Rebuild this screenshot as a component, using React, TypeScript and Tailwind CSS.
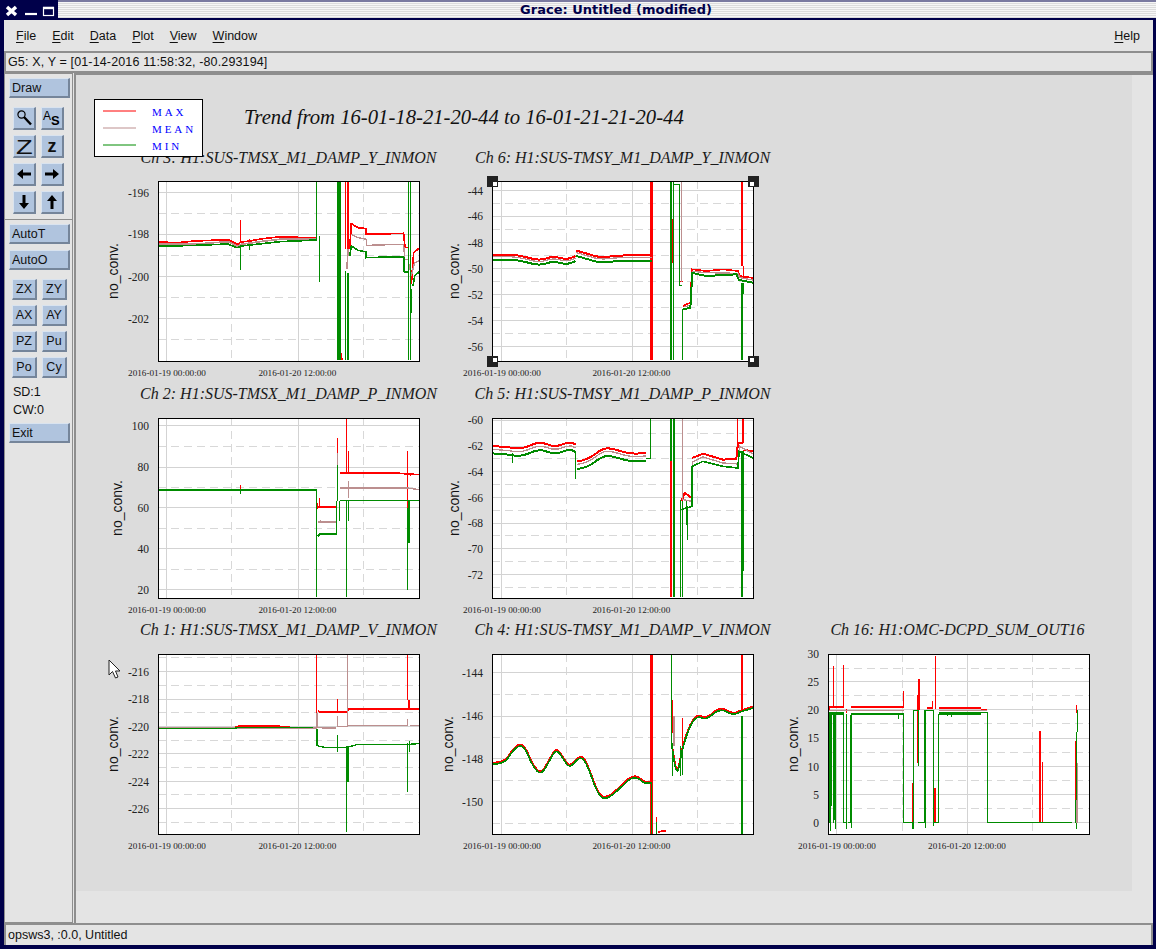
import { ReactNode } from 'react';

const R = '#ff0000';
const M = '#bc8f8f';
const G = '#008b00';

type Trace = [string, number, string];

type PlotDef = {
  id: string;
  title: string;
  ox: number;
  oy: number;
  fx: number;
  fy: number;
  labelX: number;
  vSolid: number[];
  vDash: number[];
  ticks: [number, string][];
  minor: number[];
  traces: Trace[];
  handles?: boolean;
};

// smooth line through points, coordinates are in 3x crop units
function smooth(pts: number[][], dy = 0) {
  let d = `M${pts[0][0]} ${pts[0][1] + dy}`;
  for (let i = 1; i < pts.length - 1; i++) {
    const mx = (pts[i][0] + pts[i + 1][0]) / 2;
    const my = (pts[i][1] + pts[i + 1][1]) / 2 + dy;
    d += ` Q${pts[i][0]} ${pts[i][1] + dy} ${mx} ${my}`;
  }
  const last = pts[pts.length - 1];
  return d + ` L${last[0]} ${last[1] + dy}`;
}

const wave1 = [[157, 434], [195, 432], [215, 398], [240, 375], [258, 388], [280, 442], [305, 467], [330, 422], [350, 387], [370, 417], [390, 447], [420, 410], [440, 427], [475, 527], [500, 540], [535, 512], [575, 472], [600, 477], [612, 491], [636, 491]];
const wave2 = [[697, 380], [705, 440], [715, 462], [725, 400], [745, 332], [770, 287], [800, 302], [840, 265], [880, 287], [900, 277], [940, 265]];

const ch6a = [[157, 316], [190, 316], [220, 316], [255, 322], [300, 334], [340, 320], [380, 331], [408, 320]];
const ch6b = [[410, 304], [440, 312], [480, 325], [540, 318], [590, 318], [636, 318]];
const ch5a = [[157, 184], [215, 188], [225, 192], [255, 190], [300, 170], [345, 188], [390, 171], [408, 180]];
const ch5b = [[412, 230], [440, 228], [490, 190], [520, 192], [570, 208], [620, 205]];

const col1V = { vSolid: [202, 596], vDash: [397, 791] };
const col2V = { vSolid: [187, 578], vDash: [382, 775] };

const plots: PlotDef[] = [
  {
    id: 'p3', title: 'Ch 3: H1:SUS-TMSX_M1_DAMP_Y_INMON', ox: 175, oy: 95, fx: 60, fy: 12, labelX: -45, ...col1V,
    ticks: [[130, '-196'], [255, '-198'], [382, '-200'], [508, '-202']],
    minor: [193, 320, 445, 570],
    traces: [
      [R, 5, 'M175 278 L235 280 285 275 385 271 415 285 423 278 L425 278 450 275 490 268 535 263 652 265'],
      [R, 3, 'M424 213 V280 M451 268 V280'],
      [R, 5, 'M715 125 V300'],
      [R, 4, 'M737 95 V300 M745 95 V300 M722 603 L728 633'],
      [R, 5, 'M750 300 L755 223 775 235 800 238 V255 L912 252 916 295 H925 M935 405 L942 310 958 297'],
      [M, 5, 'M175 285 L290 284 385 277 412 290 425 285 495 275 540 270 652 270 M716 175 V260 M742 360 L745 300'],
      [M, 4, 'M755 255 L775 265 800 270 V288 L912 285 915 330 H925 L935 380 945 340 958 335'],
      [G, 5, 'M175 291 L290 288 385 284 412 295 425 290 495 282 540 277 652 272'],
      [G, 3, 'M652 272 V95 M660 260 V398 M424 290 V362 M451 290 V302 M926 95 V633 M932 95 V633 M935 420 V490 M912 330 V368'],
      [G, 5, 'M715 95 V633 M721 95 V633 M738 365 V633 M716 205 V235'],
      [G, 7, 'M745 370 V633'],
      [G, 5, 'M750 320 L755 290 775 303 800 308 V325 L912 322 915 368 H925 M940 410 L945 380 958 368'],
    ],
  },
  {
    id: 'p6', title: 'Ch 6: H1:SUS-TMSY_M1_DAMP_Y_INMON', ox: 157, oy: 95, fx: 60, fy: 12, labelX: -38, handles: true, ...col2V,
    ticks: [[124, '-44'], [201, '-46'], [280, '-48'], [358, '-50'], [436, '-52'], [514, '-54'], [592, '-56']],
    minor: [163, 241, 319, 397, 475, 553],
    traces: [
      [G, 3, 'M636 332 V633'],
      [R, 6, smooth(ch6a)],
      [R, 6, smooth(ch6b)],
      [R, 9, 'M637 95 V633'],
      [R, 3, 'M698 210 V340 M705 97 H722 M722 398 H730'],
      [R, 5, 'M730 470 L752 460 757 360 800 365 850 360 895 365 900 380 940 386'],
      [R, 7, 'M908 95 V350'],
      [R, 3, 'M912 350 V386'],
      [M, 4, smooth(ch6a, 6)],
      [M, 4, smooth(ch6b, 6)],
      [M, 3, 'M727 97 V397'],
      [M, 4, 'M735 473 L752 467 758 366 800 370 895 372 900 385 940 392'],
      [G, 6, smooth(ch6a, 15)],
      [G, 6, smooth(ch6b, 16)],
      [G, 5, 'M695 95 V633 M702 95 V633'],
      [G, 3, 'M703 105 H720 V410 H727 M730 633 V480'],
      [G, 6, 'M730 480 L752 475 758 371 800 380 890 375 898 392 940 400'],
      [G, 7, 'M908 400 V633'],
      [G, 3, 'M912 400 V435'],
    ],
  },
  { id: 'blank', title: '', ox: 0, oy: 0, fx: 0, fy: 0, labelX: 0, vSolid: [], vDash: [], ticks: [], minor: [], traces: [] },
  {
    id: 'p2', title: 'Ch 2: H1:SUS-TMSX_M1_DAMP_P_INMON', ox: 175, oy: 100, fx: 60, fy: 13, labelX: -41, ...col1V,
    ticks: [[124, '100'], [248, '80'], [370, '60'], [493, '40'], [616, '20']],
    minor: [186, 310, 432, 555],
    traces: [
      [R, 3, 'M424 300 V315 M654 355 V372 M661 340 V367 M742 100 V268 M748 200 V268 M925 198 V370 M932 268 V275'],
      [R, 5, 'M654 367 H711 M714 160 V262 M722 265 H885 L958 270'],
      [M, 4, 'M654 412 H711 M662 405 V412 M722 310 H925 L958 315'],
      [M, 5, 'M714 205 V310'],
      [M, 3, 'M748 290 V340'],
      [G, 6, 'M175 315 H652'],
      [G, 3, 'M652 315 V637 M721 350 V410 M742 345 V637 M748 350 V410 M925 370 V615 M424 315 V327'],
      [G, 5, 'M654 455 L660 449 H711 V350'],
      [G, 5, 'M714 240 V350 M928 350 V475'],
      [G, 4, 'M721 348 H958'],
    ],
  },
  {
    id: 'p5', title: 'Ch 5: H1:SUS-TMSY_M1_DAMP_P_INMON', ox: 157, oy: 100, fx: 60, fy: 13, labelX: -38, ...col2V,
    ticks: [[107, '-60'], [185, '-62'], [262, '-64'], [339, '-66'], [416, '-68'], [493, '-70'], [570, '-72']],
    minor: [146, 223, 300, 377, 454, 532, 609],
    traces: [
      [R, 6, smooth(ch5a)],
      [R, 6, smooth(ch5b)],
      [R, 6, 'M725 350 L735 325 757 340 M757 220 L790 207 850 225 890 222 895 175 H910 M912 195 L940 200'],
      [R, 3, 'M895 100 V175'],
      [R, 8, 'M910 100 V175'],
      [M, 4, smooth(ch5a, 10)],
      [M, 4, smooth(ch5b, 9)],
      [M, 3, 'M728 100 V345'],
      [M, 4, 'M730 345 L757 350 758 232 790 217 850 235 895 238 900 185 940 208'],
      [G, 6, smooth(ch5a, 22)],
      [G, 6, smooth(ch5b, 23)],
      [G, 3, 'M634 220 V100 M620 222 H634 M220 205 V235 M409 200 V282 M722 345 V637 M730 350 V637 M742 350 V422 M745 365 V465'],
      [G, 5, 'M695 100 V637'],
      [R, 5, 'M695 228 V637'],
      [G, 7, 'M703 100 V637'],
      [G, 5, 'M724 375 L757 365 758 245 790 230 850 245 895 250 898 200 940 220'],
      [G, 9, 'M910 200 V560'],
      [G, 7, 'M908 560 V637'],
    ],
  },
  { id: 'blank2', title: '', ox: 0, oy: 0, fx: 0, fy: 0, labelX: 0, vSolid: [], vDash: [], ticks: [], minor: [], traces: [] },
  {
    id: 'p1', title: 'Ch 1: H1:SUS-TMSX_M1_DAMP_V_INMON', ox: 175, oy: 103, fx: 60, fy: 13, labelX: -45, ...col1V,
    ticks: [[157, '-216'], [239, '-218'], [321, '-220'], [403, '-222'], [487, '-224'], [568, '-226']],
    minor: [115, 198, 280, 362, 445, 526, 610],
    traces: [
      [R, 5, 'M175 325 H400 L420 319 H530 L590 325 H652'],
      [R, 3, 'M652 103 V280 M714 238 V275 M925 103 V240'],
      [R, 5, 'M654 272 L662 278 H740 L748 268 H925 M928 240 V268 L935 268 H958'],
      [M, 4, 'M175 325 H652 M652 280 V322 L670 325 H710 M745 318 H925 M932 318 H958'],
      [M, 3, 'M714 290 V322 H745 M925 298 V318'],
      [M, 4, 'M744 103 V318'],
      [G, 4, 'M175 327 H400 L420 323 H640'],
      [G, 4, 'M652 327 V378 L680 384 H740 L775 374 H925 L958 372'],
      [G, 3, 'M714 345 V398 M742 378 V637 M925 370 V518 M930 365 V398'],
      [G, 5, 'M745 378 V488'],
    ],
  },
  {
    id: 'p4', title: 'Ch 4: H1:SUS-TMSY_M1_DAMP_V_INMON', ox: 157, oy: 103, fx: 60, fy: 13, labelX: -44, ...col2V,
    ticks: [[160, '-144'], [290, '-146'], [418, '-148'], [546, '-150']],
    minor: [226, 355, 484, 612],
    traces: [
      [R, 6, smooth(wave1, -4)],
      [R, 6, smooth(wave2, -4)],
      [R, 9, 'M637 103 V642'],
      [R, 7, 'M908 103 V270'],
      [R, 3, 'M700 240 V340 M730 295 V375 M722 380 V470 M650 592 V642'],
      [R, 5, 'M655 638 L665 635 H680'],
      [M, 3, smooth(wave1, -1)],
      [M, 5, 'M703 290 V380 M636 590 V642'],
      [G, 5, smooth(wave1, 0)],
      [G, 5, smooth(wave2, 0)],
      [G, 3, 'M696 103 V380 M636 491 V642 M650 608 V642 M700 370 V470 M722 380 V470 M730 380 V465'],
      [G, 7, 'M908 290 V642'],
    ],
  },
  {
    id: 'p16', title: 'Ch 16: H1:OMC-DCPD_SUM_OUT16', ox: 142, oy: 103, fx: 61, fy: 13, labelX: -35, vSolid: [169, 562], vDash: [367, 757],
    ticks: [[102, '30'], [187, '25'], [271, '20'], [356, '15'], [441, '10'], [525, '5'], [610, '0']],
    minor: [146, 229, 313, 398, 483, 568],
    traces: [
      [R, 6, 'M142 263 H190 M211 262 H370 M440 264 H458 M475 264 H602'],
      [R, 3, 'M146 258 V270 M160 138 V262 M190 135 V260 M199 267 V280 M370 215 V262 M466 108 V268 M457 245 V265 M473 582 V608 M889 255 V280 M892 432 V610 M757 606 V610 M602 270 H620'],
      [R, 4, 'M209 362 V610 M203 608 H211 M397 490 V608 M412 225 V430 M415 178 V270 M463 505 V608 M776 355 V608 M785 427 V608 M886 365 V608 M431 597 V608'],
      [R, 5, 'M779 335 V608'],
      [M, 4, 'M142 272 H370 M400 272 H415 M432 272 H458 M475 272 H620 M889 430 V610'],
      [G, 7, 'M142 282 H190 M211 284 H370 M475 282 H602'],
      [G, 3, 'M147 282 V610 M150 282 V635 M160 282 V610 M164 282 V628 M190 282 V610 H199 V282 M199 610 V628 M203 610 H211 V285 M212 626 V285 M353 283 V298 M214 285 V292 M370 283 V610 H397 V628 M400 628 V272 H413 V440 M413 610 H432 V272 M434 624 V272 H458 V610 H475 V282 M458 618 V275 M602 278 H620 V610 H875 M885 610 L890 272 M888 628 V610 M500 285 V290 M512 285 V292'],
      [G, 6, 'M151 282 V560 M161 282 V600'],
    ],
  },
];

function Plot({ p }: { p: PlotDef }) {
  if (!p.title) return <div />;
  const w = 261;
  const h = 180;
  const clip = `clip-${p.id}`;
  return (
    <div className="flex flex-col">
      <div className="ml-[60px] flex h-[20px] w-[261px] justify-center whitespace-nowrap font-['Liberation_Serif',serif] text-[16px] leading-[18px] text-[#1a1a1a] italic">
        {p.title}
      </div>
      <svg width={334} height={216} className="block overflow-visible">
        <defs>
          <clipPath id={clip}>
            <rect x={p.fx} y={p.fy} width={w} height={h} />
          </clipPath>
        </defs>
        <rect x={p.fx} y={p.fy} width={w} height={h} fill="#fff" />
        <g clipPath={`url(#${clip})`}>
          <g transform={`translate(${p.fx} ${p.fy}) scale(0.33333) translate(${-p.ox} ${-p.oy})`} fill="none" shapeRendering="crispEdges">
            {p.minor.map((y) => (
              <path key={y} d={`M${p.ox} ${y} h783`} stroke="#d8d8d8" strokeWidth={3} strokeDasharray="24 15" />
            ))}
            {p.vDash.map((x) => (
              <path key={x} d={`M${x} ${p.oy} v540`} stroke="#d8d8d8" strokeWidth={3} strokeDasharray="24 15" />
            ))}
            {p.ticks.map(([y]) => (
              <path key={y} d={`M${p.ox} ${y} h783`} stroke="#d3d3d3" strokeWidth={3} />
            ))}
            {p.vSolid.map((x) => (
              <path key={x} d={`M${x} ${p.oy} v540`} stroke="#d3d3d3" strokeWidth={3} />
            ))}
            {p.traces.map(([c, sw, d], i) => (
              <path key={i} d={d} stroke={c} strokeWidth={sw} />
            ))}
          </g>
        </g>
        <rect x={p.fx + 0.5} y={p.fy + 0.5} width={w} height={h} fill="none" stroke="#000" shapeRendering="crispEdges" />
        <g className="font-['Liberation_Serif',serif] text-[11.5px]" fill="#222">
          {p.ticks.map(([y, label]) => (
            <text key={label} x={p.fx - 9} y={p.fy + (y - p.oy) / 3 + 4} textAnchor="end">
              {label}
            </text>
          ))}
        </g>
        <g className="font-['Liberation_Serif',serif] text-[9.2px]" fill="#222">
          <text x={p.fx + (p.vSolid[0] - p.ox) / 3} y={p.fy + h + 15} textAnchor="middle">2016-01-19 00:00:00</text>
          <text x={p.fx + (p.vSolid[1] - p.ox) / 3 - 1} y={p.fy + h + 15} textAnchor="middle">2016-01-20 12:00:00</text>
        </g>
        <text
          transform={`translate(${p.fx + p.labelX + 5} ${p.fy + h / 2}) rotate(-90)`}
          textAnchor="middle"
          className="font-['Liberation_Sans',sans-serif] text-[14px]"
          fill="#111"
        >
          no_conv.
        </text>
        {p.handles &&
          [[0, 0, 1, 1], [w, 0, -1, 1], [0, h, 1, -1], [w, h, -1, -1]].map(([x, y, sx, sy]) => (
            <g key={`${x}-${y}`} transform={`translate(${p.fx + x} ${p.fy + y})`} shapeRendering="crispEdges">
              <rect x={-5} y={-5} width={11} height={11} fill="#222" />
              <rect x={sx > 0 ? 1 : -3} y={sy > 0 ? 1 : -3} width={4} height={4} fill="#fff" />
            </g>
          ))}
      </svg>
    </div>
  );
}

function Btn({ children, className = '' }: { children: ReactNode; className?: string }) {
  return (
    <div className={`flex items-center border-t border-r-2 border-b-2 border-l border-t-[#d9e3ef] border-r-[#75859a] border-b-[#75859a] border-l-[#d9e3ef] bg-[#b0c4de] text-[12.5px] leading-none text-[#111] ${className}`}>
      {children}
    </div>
  );
}

function WideBtn({ label, className = '' }: { label: string; className?: string }) {
  return <Btn className={`h-[20px] w-[61px] pt-[2px] pl-[2px] ${className}`}>{label}</Btn>;
}

function IconBtn({ children }: { children: ReactNode }) {
  return <Btn className="h-[23px] w-[23px] justify-center">{children}</Btn>;
}

function TextBtn({ label }: { label: string }) {
  return <Btn className="h-[21px] w-[25px] justify-center">{label}</Btn>;
}

function Arrow({ rot }: { rot: number }) {
  return (
    <svg width="16" height="16" viewBox="0 0 16 16" style={{ transform: `rotate(${rot}deg)` }}>
      <path d="M1 8 L7 3 V6.5 H15 V9.5 H7 V13 Z" fill="#000" />
    </svg>
  );
}

function ToolPanel() {
  return (
    <div className="flex w-[69px] flex-col border border-[#8e8e8e] pt-[4px] pl-[4px]">
      <WideBtn label="Draw" />
      <div className="mt-[9px] ml-[4px] grid grid-cols-[23px_23px] gap-x-[5px] gap-y-[5px]">
        <IconBtn>
          <svg width="18" height="18" viewBox="0 0 18 18" fill="none" stroke="#000">
            <circle cx="6.5" cy="5.5" r="3.6" strokeWidth="1.2" />
            <path d="M9 8 L16 15.5" strokeWidth="2.4" />
          </svg>
        </IconBtn>
        <IconBtn>
          <svg width="20" height="20" viewBox="0 0 20 20">
            <text x="1" y="12" fontSize="12" fontFamily="Liberation Sans" fill="#000">A</text>
            <text x="9" y="17" fontSize="13" fontWeight="700" fontFamily="Liberation Sans" fill="#000">S</text>
          </svg>
        </IconBtn>
        <IconBtn>
          <span className="scale-x-130 text-[21px] leading-none">Z</span>
        </IconBtn>
        <IconBtn>
          <span className="text-[18px] leading-none font-bold">z</span>
        </IconBtn>
        <IconBtn><Arrow rot={0} /></IconBtn>
        <IconBtn><Arrow rot={180} /></IconBtn>
        <IconBtn><Arrow rot={270} /></IconBtn>
        <IconBtn><Arrow rot={90} /></IconBtn>
      </div>
      <div className="mt-[5px] -ml-[4px] h-px bg-[#8e8e8e]" />
      <div className="mt-[4px] flex flex-col gap-[6px]">
        <WideBtn label="AutoT" />
        <WideBtn label="AutoO" />
      </div>
      <div className="mt-[9px] ml-[3px] grid grid-cols-[25px_25px] gap-x-[5px] gap-y-[5px]">
        {['ZX', 'ZY', 'AX', 'AY', 'PZ', 'Pu', 'Po', 'Cy'].map((l) => (
          <TextBtn key={l} label={l} />
        ))}
      </div>
      <div className="mt-[5px] pl-[4px] text-[12.5px] leading-[18px] text-[#111]">
        <div>SD:1</div>
        <div>CW:0</div>
      </div>
      <WideBtn label="Exit" className="mt-[4px]" />
    </div>
  );
}

const menus = ['File', 'Edit', 'Data', 'Plot', 'View', 'Window'];

function MenuItem({ name }: { name: string }) {
  return (
    <span>
      <span className="underline underline-offset-2">{name[0]}</span>
      {name.slice(1)}
    </span>
  );
}

export default function App() {
  return (
    <div className="flex h-[949px] w-[1156px] flex-col overflow-hidden bg-[#00004a] font-['Liberation_Sans',sans-serif] text-[12.5px] text-[#111]">
      {/* window manager title */}
      <div className="flex h-[20px] shrink-0">
        <div className="w-[58px]">
          <svg width="58" height="20" viewBox="0 0 58 20" className="block">
            <path d="M7 7 L16 15 M16 7 L7 15" stroke="#fff" strokeWidth="3.5" />
            <path d="M25 14 H37" stroke="#fff" strokeWidth="2.2" />
            <rect x="43.5" y="7.5" width="10" height="8" fill="none" stroke="#fff" strokeWidth="1.2" />
            <path d="M43 8 H54" stroke="#fff" strokeWidth="2.4" />
          </svg>
        </div>
        <div className="mb-[2px] flex flex-1 items-center justify-center border-t-2 border-[#7a7aa0] bg-[repeating-linear-gradient(180deg,#f6f6f6_0px,#f6f6f6_1px,#dcdcdc_1px,#dcdcdc_2px)] pl-[18px]">
          <span className="font-['DejaVu_Sans',sans-serif] text-[13px] leading-[16px] font-bold text-[#00004a]">Grace: Untitled (modified)</span>
        </div>
      </div>

      <div className="mr-[3px] mb-[4px] ml-[4px] flex flex-1 flex-col bg-[#e4e4e4]">
        <div className="flex h-[31px] shrink-0 items-center justify-between pt-[2px] pr-[13px] pl-[12px]">
          <div className="flex gap-[16px]">
            {menus.map((m) => (
              <MenuItem key={m} name={m} />
            ))}
          </div>
          <MenuItem name="Help" />
        </div>

        <div className="flex h-[22px] shrink-0 items-center border-2 border-[#8e8e8e] pl-[2px] tracking-[0.14px]">
          G5: X, Y = [01-14-2016 11:58:32, -80.293194]
        </div>

        <div className="flex min-h-0 flex-1">
          <ToolPanel />
          <div className="ml-px flex-1 border-t-2 border-l-2 border-[#8e8e8e]">
            <div className="relative h-[816px] w-[1056px] bg-[#dcdcdc] pt-[32px] pl-[22px]">
              <div className="ml-[146px] h-[42px] font-['Liberation_Serif',serif] text-[20.7px] leading-[20px] whitespace-nowrap text-[#111] italic">
                Trend from 16-01-18-21-20-44 to 16-01-21-21-20-44
              </div>
              <div className="grid grid-cols-[334px_335px_334px] grid-rows-[236px_236px_236px]">
                {plots.map((p) => (
                  <Plot key={p.id} p={p} />
                ))}
              </div>

              {/* legend box sits on top of the first plot title */}
              <div className="absolute top-[24px] left-[18px] flex h-[58px] w-[109px] flex-col justify-center gap-[4px] border border-black bg-white pl-[8px] font-['Liberation_Serif',serif] text-[11px] leading-[12px] tracking-[2.9px] text-[#0000ff]">
                {[['MAX', R], ['MEAN', M], ['MIN', G]].map(([t, c]) => (
                  <div key={t} className="flex items-center">
                    <svg width="33" height="2" className="mr-[16px] block shrink-0">
                      <path d="M0 1 H33" stroke={c} />
                    </svg>
                    <span className="pt-px">{t}</span>
                  </div>
                ))}
              </div>

              {/* mouse pointer */}
              <svg width="14" height="20" viewBox="0 0 14 20" className="absolute top-[584px] left-[32px]">
                <path d="M1 1 V16 L4.5 12.5 L7.5 19 L10 18 L7.5 12 H12 Z" fill="#fff" stroke="#222" />
              </svg>
            </div>
          </div>
        </div>

        <div className="flex h-[22px] shrink-0 items-center border-2 border-b-0 border-[#8e8e8e] pl-[2px]">
          opsws3, :0.0, Untitled
        </div>
      </div>
    </div>
  );
}
